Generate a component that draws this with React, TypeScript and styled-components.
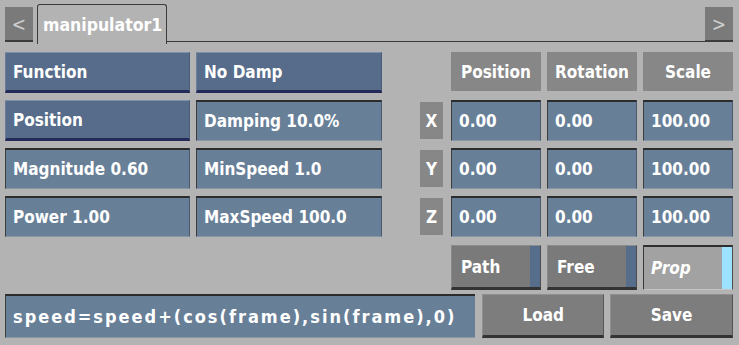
import styled, { createGlobalStyle } from "styled-components";

const GlobalStyle = createGlobalStyle`
  html, body {
    margin: 0;
    padding: 0;
    background: #b3b3b3;
  }
  body {
    font-family: "DejaVu Sans Condensed", "DejaVu Sans", sans-serif;
  }
`;

type Tone = "active" | "field";

const leftRows: [string, string, Tone][] = [
  ["Function", "No Damp", "active"],
  ["Position", "Damping 10.0%", "field"],
  ["Magnitude 0.60", "MinSpeed 1.0", "field"],
  ["Power 1.00", "MaxSpeed 100.0", "field"],
];

const axes: [string, string[]][] = [
  ["X", ["0.00", "0.00", "100.00"]],
  ["Y", ["0.00", "0.00", "100.00"]],
  ["Z", ["0.00", "0.00", "100.00"]],
];

const App = () => {
  return (
    <Page>
      <GlobalStyle />
      <TabBar>
        <NavButton>&lt;</NavButton>
        <Tab>manipulator1</Tab>
        <TabLine />
        <NavButton>&gt;</NavButton>
      </TabBar>

      <Body>
        {leftRows.map(([a, b, tone], i) => (
          <Row key={a}>
            <Cell $tone={i === 1 ? "active" : tone}>{a}</Cell>
            <Cell $tone={tone}>{b}</Cell>
            <Spacer />
            {i === 0 ? (
              <>
                <Spacer />
                <Header>Position</Header>
                <Header>Rotation</Header>
                <Header>Scale</Header>
              </>
            ) : (
              <>
                <Axis>{axes[i - 1][0]}</Axis>
                {axes[i - 1][1].map((v, j) => (
                  <Cell key={j} $tone="field">
                    {v}
                  </Cell>
                ))}
              </>
            )}
          </Row>
        ))}

        <ModeRow>
          <ModeButton>Path</ModeButton>
          <ModeButton>Free</ModeButton>
          <ModeButton $on>Prop</ModeButton>
        </ModeRow>

        <BottomRow>
          <Expression>speed=speed+(cos(frame),sin(frame),0)</Expression>
          <ActionButton>Load</ActionButton>
          <ActionButton>Save</ActionButton>
        </BottomRow>
      </Body>
    </Page>
  );
};

const Page = styled.div`
  width: 739px;
  height: 345px;
  background: #b3b3b3;
  overflow: hidden;
  box-sizing: border-box;
  padding: 0 6px 0 5px;
  color: #ffffff;
  font-weight: bold;
  font-size: 17px;
`;

const TabBar = styled.div`
  display: flex;
  align-items: flex-end;
  height: 44px;
  padding-top: 4px;
  box-sizing: border-box;
`;

const NavButton = styled.div`
  width: 28px;
  height: 35px;
  box-sizing: border-box;
  background: #7a7a7a;
  border-bottom: 2px solid #3c3c3c;
  color: #cfcfcf;
  font-weight: normal;
  font-size: 19px;
  display: flex;
  align-items: center;
  justify-content: center;
  margin-bottom: 2px;
`;

const Tab = styled.div`
  width: 130px;
  height: 40px;
  margin-left: 4px;
  box-sizing: border-box;
  border: 1px solid #3a3a3a;
  border-bottom: none;
  border-radius: 3px 3px 0 0;
  padding-left: 5px;
  display: flex;
  align-items: center;
  font-size: 17.5px;
`;

const TabLine = styled.div`
  flex: 1;
  align-self: flex-end;
  border-bottom: 1px solid #3a3a3a;
  margin-bottom: 2px;
`;

const Body = styled.div`
  display: flex;
  flex-direction: column;
  gap: 7px;
  margin-top: 8px;
`;

const Row = styled.div`
  display: grid;
  grid-template-columns: 185px 186px 26px 25px 90px 90px 90px;
  column-gap: 6px;
  height: 41px;
`;

const Cell = styled.div<{ $tone: Tone }>`
  box-sizing: border-box;
  display: flex;
  align-items: center;
  padding-left: 7px;
  white-space: nowrap;
  background: ${(p) => (p.$tone === "active" ? "#566c8a" : "#687f98")};
  border-top: ${(p) =>
    p.$tone === "active" ? "1px solid #7d90a8" : "2px solid #2c2c2c"};
  border-left: ${(p) =>
    p.$tone === "active" ? "1px solid #6a7e98" : "1px solid #3c3c3c"};
  border-right: ${(p) =>
    p.$tone === "active" ? "1px solid #4a5c78" : "1px solid #4a5a6c"};
  border-bottom: ${(p) =>
    p.$tone === "active" ? "3px solid #262a58" : "1px solid #8797a8"};
`;

const Spacer = styled.div``;

const Axis = styled.div`
  background: #878787;
  display: flex;
  align-items: center;
  justify-content: center;
  margin: 2px 2px 2px 0;
`;

const Header = styled.div`
  background: #878787;
  display: flex;
  align-items: center;
  justify-content: center;
  margin-bottom: 2px;
`;

const ModeRow = styled.div`
  display: grid;
  grid-template-columns: 90px 90px 90px;
  column-gap: 6px;
  justify-content: end;
  height: 45px;
  margin-top: 1px;
`;

const ModeButton = styled.div<{ $on?: boolean }>`
  box-sizing: border-box;
  display: flex;
  align-items: center;
  padding-left: ${(p) => (p.$on ? "7px" : "9px")};
  font-style: ${(p) => (p.$on ? "italic" : "normal")};
  background: ${(p) =>
    p.$on
      ? "linear-gradient(to left, #9de2ff 0, #9de2ff 10px, #a2a2a2 10px)"
      : "linear-gradient(to left, #576d8c 0, #576d8c 10px, #7a7a7a 10px)"};
  border-top: ${(p) => (p.$on ? "2px solid #2f2f2f" : "1px solid #8c8c8c")};
  border-left: ${(p) => (p.$on ? "1px solid #3a3a3a" : "1px solid #8a8a8a")};
  border-right: 1px solid #4c4c4c;
  border-bottom: ${(p) => (p.$on ? "1px solid #c4c4c4" : "3px solid #333333")};
`;

const BottomRow = styled.div`
  display: flex;
  gap: 6px;
  height: 44px;
  margin-top: -3px;
`;

const Expression = styled.div`
  width: 471px;
  box-sizing: border-box;
  margin-right: 1px;
  display: flex;
  align-items: center;
  padding-left: 7px;
  background: #687f98;
  border-top: 2px solid #2c2c2c;
  border-left: 1px solid #3c3c3c;
  border-bottom: 1px solid #8797a8;
  white-space: nowrap;
  font-size: 18px;
  letter-spacing: 2px;
`;

const ActionButton = styled.div`
  width: 122px;
  box-sizing: border-box;
  display: flex;
  align-items: center;
  justify-content: center;
  background: #7d7d7d;
  border-top: 1px solid #8f8f8f;
  border-left: 1px solid #8f8f8f;
  border-right: 1px solid #555555;
  border-bottom: 3px solid #333333;
  &:last-child {
    width: 123px;
  }
`;

export default App;
